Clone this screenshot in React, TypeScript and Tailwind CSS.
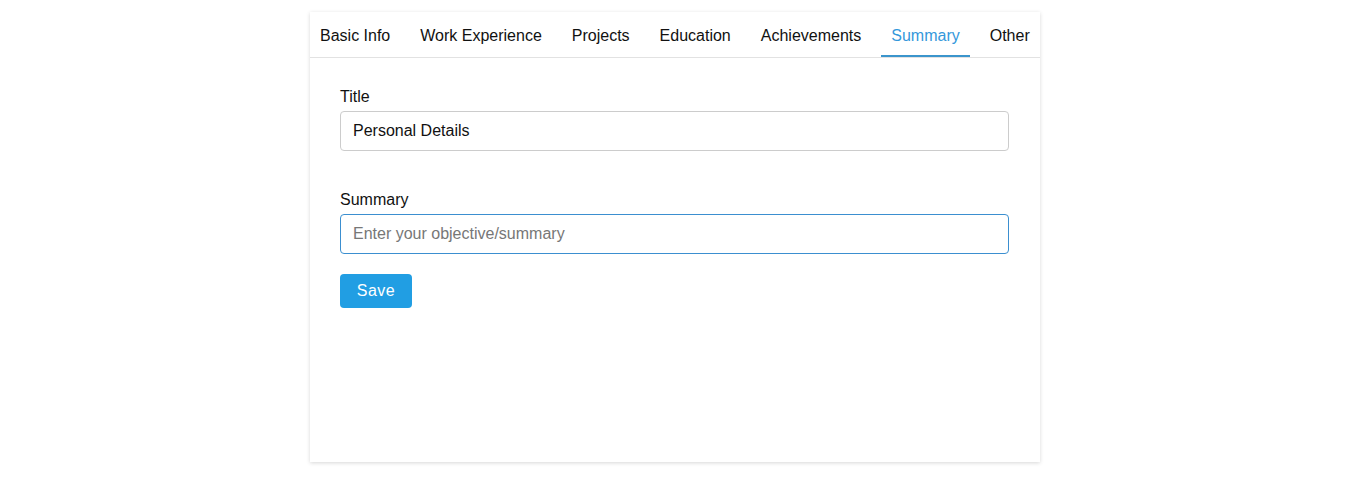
import { useState } from "react";

const tabs = ["Basic Info", "Work Experience", "Projects", "Education", "Achievements", "Summary", "Other"];

export default function App() {
  const [active, setActive] = useState("Summary");
  const [title, setTitle] = useState("Personal Details");
  const [summary, setSummary] = useState("");

  return (
    <div className="min-h-screen bg-white pl-[3px] pt-3 font-['Liberation_Sans',Arial,sans-serif] text-[16px] text-[#111]">
      <div className="mx-auto h-[450px] w-[730px] bg-white shadow-[0_1px_4px_rgba(0,0,0,0.16)]">
        {/* Tab bar */}
        <div className="flex h-[46px] gap-[10px] border-b border-[#e2e2e2]">
          {tabs.map((t) => (
            <button
              key={t}
              onClick={() => setActive(t)}
              className={
                t === active
                  ? "border-b-2 border-[#3b95cc] px-[10px] pt-[4px] text-[#3498db]"
                  : "border-b-2 border-transparent px-[10px] pt-[4px] text-[#111]"
              }
            >
              {t}
            </button>
          ))}
        </div>

        <div className="px-[30px] pt-[30px]">
          <label className="block leading-[18px]">Title</label>
          <input
            value={title}
            onChange={(e) => setTitle(e.target.value)}
            className="mt-[5px] h-[40px] w-[669px] rounded-[4px] border border-[#cccccc] px-[12px] text-[16px] text-[#111] outline-none"
          />

          <label className="mt-[40px] block leading-[18px]">Summary</label>
          <input
            value={summary}
            onChange={(e) => setSummary(e.target.value)}
            placeholder="Enter your objective/summary"
            autoFocus
            className="mt-[5px] h-[40px] w-[669px] rounded-[4px] border border-[#3b8fd0] px-[12px] text-[16px] text-[#111] outline-none placeholder:text-[#777]"
          />

          <button className="mt-[20px] h-[34px] w-[72px] rounded-[4px] bg-[#219ee3] text-[16px] tracking-[0.5px] text-white">
            Save
          </button>
        </div>
      </div>
    </div>
  );
}
